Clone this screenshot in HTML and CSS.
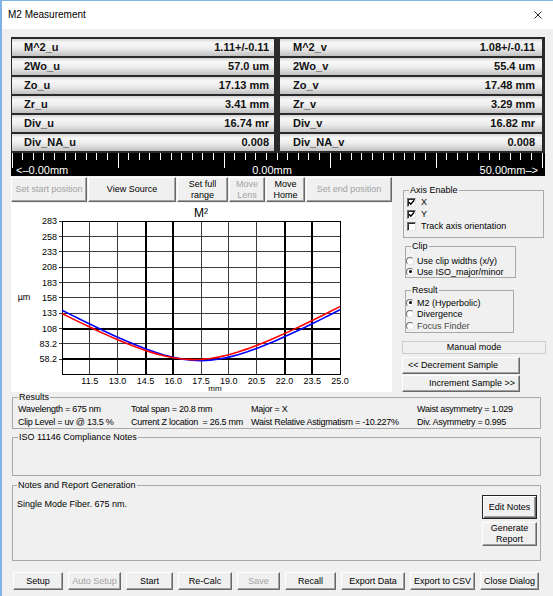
FILE: index.html
```html
<!DOCTYPE html>
<html>
<head>
<meta charset="utf-8">
<title>M2 Measurement</title>
<link rel="stylesheet" href="styles.css">
</head>
<body>
<div class="window">
  <div class="titlebar">
    <span class="title">M2 Measurement</span>
    <svg class="close" viewBox="0 0 8 8"><path d="M0.5 0.5L7.5 7.5M7.5 0.5L0.5 7.5" stroke="#111" stroke-width="0.9" fill="none"/></svg>
  </div>
  <div class="content">
    <div class="readout">
      <div class="col">
        <div class="row"><span>M^2_u</span><span>1.11+/-0.11</span></div>
        <div class="row"><span>2Wo_u</span><span>57.0 um</span></div>
        <div class="row"><span>Zo_u</span><span>17.13 mm</span></div>
        <div class="row"><span>Zr_u</span><span>3.41 mm</span></div>
        <div class="row"><span>Div_u</span><span>16.74 mr</span></div>
        <div class="row"><span>Div_NA_u</span><span>0.008</span></div>
      </div>
      <div class="col right">
        <div class="row"><span>M^2_v</span><span>1.08+/-0.11</span></div>
        <div class="row"><span>2Wo_v</span><span>55.4 um</span></div>
        <div class="row"><span>Zo_v</span><span>17.48 mm</span></div>
        <div class="row"><span>Zr_v</span><span>3.29 mm</span></div>
        <div class="row"><span>Div_v</span><span>16.82 mr</span></div>
        <div class="row"><span>Div_NA_v</span><span>0.008</span></div>
      </div>
    </div>
    <div class="ruler">
      <svg class="ticks" width="534" height="23" viewBox="0 0 534 23">
        <path stroke="#fff" stroke-width="1" fill="none" d="M11.5 0v7M22.5 0v7M32.5 0v7M43.5 0v7M54.5 0v7M64.5 0v7M75.5 0v7M85.5 0v7M96.5 0v7M117.5 0v7M128.5 0v7M138.5 0v7M149.5 0v7M160.5 0v7M170.5 0v7M181.5 0v7M191.5 0v7M202.5 0v7M223.5 0v7M234.5 0v7M244.5 0v7M255.5 0v7M266.5 0v7M276.5 0v7M287.5 0v7M297.5 0v7M308.5 0v7M329.5 0v7M340.5 0v7M350.5 0v7M361.5 0v7M372.5 0v7M382.5 0v7M393.5 0v7M403.5 0v7M414.5 0v7M435.5 0v7M446.5 0v7M456.5 0v7M467.5 0v7M478.5 0v7M488.5 0v7M499.5 0v7M509.5 0v7M520.5 0v7"/>
        <path stroke="#fff" stroke-width="1" fill="none" d="M1.5 0v15M107.5 0v15M213.5 0v15M319.5 0v15M425.5 0v15M531.5 0v15"/>
      </svg>
      <div class="ruler-labels">
        <span class="rl-left">&lt;–0.00mm</span>
        <span class="rl-mid">0.00mm</span>
        <span class="rl-right">50.00mm–&gt;</span>
      </div>
    </div>
    <div class="mid">
      <div class="leftcol">
        <div class="toolbar">
          <button class="btn dis w-start">Set start position</button>
          <button class="btn w-src">View Source</button>
          <button class="btn w-full">Set full<br>range</button>
          <button class="btn dis w-lens">Move<br>Lens</button>
          <button class="btn w-home">Move<br>Home</button>
          <button class="btn dis w-end">Set end position</button>
        </div>
        <div class="chart">
          <svg width="381" height="189" viewBox="0 0 381 189">
            <g stroke="#3c3c3c" stroke-width="1" fill="none" shape-rendering="crispEdges">
              <path d="M48 33.5H329M48 48.5H329M48 64.5H329M48 79.5H329M48 94.5H329M48 110.5H329M48 140.5H329"/>
              <path d="M48 18.5H329M48 125.5H51M48 156.5H51"/>
              <path d="M78.5 18V171M106.5 18V171M190.5 18V171M217.5 18V171M245.5 18V171"/>
            </g>
            <g stroke="#000" stroke-width="2" fill="none" shape-rendering="crispEdges">
              <path d="M51 125.5H329M51 156H329"/>
              <path d="M134.5 18V171M162 18V171M273.5 18V171M301 18V171"/>
            </g>
            <rect x="51.5" y="18.5" width="278" height="153" fill="none" stroke="#000" stroke-width="1" shape-rendering="crispEdges"/>
            <polyline fill="none" stroke="#0000ff" stroke-width="1.6" points="51,107.18 60.27,111.88 69.53,116.52 78.8,121.08 88.07,125.56 97.33,129.93 106.6,134.17 115.87,138.24 125.13,142.11 134.4,145.73 143.67,149.02 152.93,151.92 162.2,154.31 171.47,156.12 180.73,157.23 190,157.6 199.27,157.17 208.53,156 217.8,154.14 227.07,151.7 236.33,148.77 245.6,145.45 254.87,141.81 264.13,137.93 273.4,133.83 282.67,129.58 291.93,125.2 301.2,120.72 310.47,116.15 319.73,111.5 329,106.8"/>
            <polyline fill="none" stroke="#ff0000" stroke-width="1.6" points="51,110.55 60.27,115.14 69.53,119.65 78.8,124.09 88.07,128.42 97.33,132.62 106.6,136.66 115.87,140.51 125.13,144.12 134.4,147.42 143.67,150.36 152.93,152.82 162.2,154.74 171.47,156.02 180.73,156.59 190,156.41 199.27,155.49 208.53,153.9 217.8,151.7 227.07,149 236.33,145.88 245.6,142.42 254.87,138.69 264.13,134.75 273.4,130.62 282.67,126.36 291.93,121.98 301.2,117.5 310.47,112.94 319.73,108.32 329,103.64"/>
            <g font-family="Liberation Sans, Arial, sans-serif" font-size="9" fill="#000" text-anchor="end">
              <text x="46" y="21">283</text>
              <text x="46" y="36.5">258</text>
              <text x="46" y="51.5">233</text>
              <text x="46" y="67">208</text>
              <text x="46" y="82.5">183</text>
              <text x="46" y="97.5">158</text>
              <text x="46" y="113">133</text>
              <text x="46" y="128.5">108</text>
              <text x="46" y="143.5">83.2</text>
              <text x="46" y="159">58.2</text>
            </g>
            <g font-family="Liberation Sans, Arial, sans-serif" font-size="9" fill="#000" text-anchor="middle">
              <text x="78.8" y="181">11.5</text>
              <text x="106.6" y="181">13.0</text>
              <text x="134.4" y="181">14.5</text>
              <text x="162.2" y="181">16.0</text>
              <text x="190" y="181">17.5</text>
              <text x="217.8" y="181">19.0</text>
              <text x="245.6" y="181">20.5</text>
              <text x="273.4" y="181">22.0</text>
              <text x="301.2" y="181">23.5</text>
              <text x="329" y="181">25.0</text>
              <text x="204" y="188" font-size="8">mm</text>
              <text x="13" y="97">µm</text>
              <text x="190" y="14" font-size="12">M²</text>
            </g>
          </svg>
        </div>
      </div>
      <div class="rightcol">
        <fieldset class="grp axis">
          <legend>Axis Enable</legend>
          <div class="opt ck"><span class="cb"><svg viewBox="0 0 7 7"><path d="M1 3.3L2.8 5.2L6.2 1.2" stroke="#000" stroke-width="1.4" fill="none"/></svg></span><span>X</span></div>
          <div class="opt ck"><span class="cb"><svg viewBox="0 0 7 7"><path d="M1 3.3L2.8 5.2L6.2 1.2" stroke="#000" stroke-width="1.4" fill="none"/></svg></span><span>Y</span></div>
          <div class="opt ck"><span class="cb"></span><span>Track axis orientation</span></div>
        </fieldset>
        <fieldset class="grp clip">
          <legend>Clip</legend>
          <div class="opt rd"><span class="rb"></span><span>Use clip widths (x/y)</span></div>
          <div class="opt rd"><span class="rb on"></span><span>Use ISO_major/minor</span></div>
        </fieldset>
        <fieldset class="grp result">
          <legend>Result</legend>
          <div class="opt rd r2"><span class="rb on"></span><span>M2 (Hyperbolic)</span></div>
          <div class="opt rd r2"><span class="rb"></span><span>Divergence</span></div>
          <div class="opt rd r2 faint"><span class="rb"></span><span>Focus Finder</span></div>
        </fieldset>
        <div class="manual">Manual mode</div>
        <button class="btn step dec">&lt;&lt; Decrement Sample</button>
        <button class="btn step inc">Increment Sample &gt;&gt;</button>
      </div>
    </div>
    <fieldset class="grp wide results">
      <legend>Results</legend>
      <div class="res-grid">
        <span>Wavelength = 675 nm</span>
        <span>Total span = 20.8 mm</span>
        <span>Major = X</span>
        <span>Waist asymmetry = 1.029</span>
        <span>Clip Level = uv @ 13.5 %</span>
        <span>Current Z location &nbsp;= 26.5 mm</span>
        <span>Waist Relative Astigmatism = -10.227%</span>
        <span>Div. Asymmetry = 0.995</span>
      </div>
    </fieldset>
    <fieldset class="grp wide iso">
      <legend>ISO 11146 Compliance Notes</legend>
    </fieldset>
    <fieldset class="grp wide notes">
      <legend>Notes and Report Generation</legend>
      <div class="notes-body">
        <span class="note-text">Single Mode Fiber. 675 nm.</span>
        <div class="note-btns">
          <button class="btn def">Edit Notes</button>
          <button class="btn">Generate<br>Report</button>
        </div>
      </div>
    </fieldset>
    <div class="bottombar">
      <button class="btn b-setup">Setup</button>
      <button class="btn dis b-auto">Auto Setup</button>
      <button class="btn b-start">Start</button>
      <button class="btn b-recalc">Re-Calc</button>
      <button class="btn dis b-save">Save</button>
      <button class="btn b-recall">Recall</button>
      <button class="btn b-export">Export Data</button>
      <button class="btn b-csv">Export to CSV</button>
      <button class="btn b-close">Close Dialog</button>
    </div>
  </div>
</div>
</body>
</html>
```

FILE: styles.css
```css
* { box-sizing: border-box; }
html, body { margin: 0; padding: 0; }
body {
  width: 553px;
  height: 596px;
  overflow: hidden;
  background: #f0f0f0;
  font-family: "Liberation Sans", Arial, sans-serif;
  font-size: 9px;
  line-height: 10px;
  color: #000;
}
.window {
  width: 553px;
  height: 596px;
  border-left: 2px solid #80b3e4;
  border-top: 1px solid #80b3e4;
  background: #f0f0f0;
}
.titlebar {
  height: 28px;
  background: #fff;
  display: flex;
  align-items: center;
  justify-content: space-between;
  padding: 0 11px 0 6px;
}
.title { font-size: 10px; line-height: 12px; }
.close { width: 8px; height: 8px; display: block; }

.content { padding: 8px 0 0 9px; }

/* readout panel */
.readout {
  width: 534px;
  display: grid;
  grid-template-columns: 262px 262px;
  column-gap: 6px;
  padding: 2px 3px 0 1px;
  background: #2a2a2a;
}
.col { display: flex; flex-direction: column; }
.row {
  height: 19px;
  border-bottom: 2px solid #2a2a2a;
  background: linear-gradient(to bottom, #d6d6d6 0%, #f8f8f8 22%, #ececec 55%, #c2c2c2 100%);
  display: flex;
  align-items: center;
  justify-content: space-between;
  padding: 0 5px 0 12px;
  font-weight: bold;
  font-size: 11px;
  line-height: 13px;
  color: #111;
}
.col.right .row { padding: 0 7px 0 13px; }

/* ruler */
.ruler {
  width: 534px;
  height: 23px;
  background: #000;
  display: grid;
}
.ruler > * { grid-area: 1 / 1; }
.ticks { display: block; }
.ruler-labels {
  display: grid;
  grid-template-columns: 1fr auto 1fr;
  align-items: end;
  padding: 0 7px 0 5px;
  color: #fff;
  font-size: 11px;
  line-height: 11px;
}
.rl-left { justify-self: start; }
.rl-mid { margin-right: 10px; }
.rl-right { justify-self: end; }

/* middle */
.mid {
  display: flex;
  gap: 10px;
  margin-top: 1px;
  height: 215px;
}
.leftcol { width: 381px; }
.toolbar { display: flex; gap: 1px; height: 25px; }
.chart { margin-top: 1px; height: 189px; background: #fff; overflow: hidden; }
.chart svg { display: block; }

/* buttons */
.btn {
  appearance: none;
  -webkit-appearance: none;
  margin: 0;
  padding: 0;
  background: #f0f0f0;
  border: 1px solid;
  border-color: #fff #696969 #696969 #fff;
  box-shadow: inset -1px -1px 0 #a0a0a0;
  font-family: "Liberation Sans", Arial, sans-serif;
  font-size: 9px;
  line-height: 11px;
  color: #000;
  display: flex;
  align-items: center;
  justify-content: center;
  text-align: center;
}
.btn.dis { color: #a3a3a3; }
.btn.def {
  border-color: #222;
  box-shadow: inset 1px 1px 0 #fff, inset -1px -1px 0 #696969, inset -2px -2px 0 #a0a0a0;
}
.w-start { width: 76px; }
.w-src { width: 88px; }
.w-full { width: 51px; }
.w-lens { width: 36px; }
.w-home { width: 39px; }
.w-end { width: 86px; }

/* group boxes */
.grp {
  margin: 0;
  padding: 0;
  border: 1px solid #a9a9a9;
  min-width: 0;
  font-size: 9px;
  line-height: 10px;
}
.grp legend {
  padding: 0 1px;
  font-size: 9px;
  line-height: 10px;
}

.rightcol { width: 144px; display: flex; flex-direction: column; }
.axis { margin: 8px 0 0 1px; width: 141px; padding: 1px 3px 5px 3px; }
.axis legend { margin-left: 2px; }
.clip { margin: 3px 0 0 3px; width: 111px; padding: 4px 0 0 0; }
.clip legend { margin-left: 5px; }
.result { margin: 7px 0 0 3px; width: 109px; padding: 2px 0 0 0; }
.result legend { margin-left: 5px; }

.opt { display: flex; align-items: center; }
.ck { height: 12px; gap: 5px; }
.rd { height: 11px; gap: 3px; }
.rd.r2 { height: 11.5px; }
.faint { color: #4a4a4a; }

.cb {
  width: 9px;
  height: 9px;
  border: 1px solid;
  border-color: #6b6b6b #e3e3e3 #e3e3e3 #6b6b6b;
  box-shadow: inset 1px 1px 0 #2b2b2b;
  background: #fff;
  display: block;
  flex: none;
}
.cb svg { display: block; width: 7px; height: 7px; }
.rb {
  width: 8px;
  height: 8px;
  border-radius: 50%;
  border: 1px solid;
  border-color: #6f6f6f #e6e6e6 #e6e6e6 #6f6f6f;
  background: #fff;
  display: flex;
  align-items: center;
  justify-content: center;
  flex: none;
}
.rb.on::after {
  content: "";
  width: 3px;
  height: 3px;
  border-radius: 50%;
  background: #000;
}

.manual {
  margin-top: 8px;
  height: 14px;
  border: 1px solid #cdcdcd;
  display: flex;
  align-items: center;
  justify-content: center;
}
.step { width: 118px; height: 18px; }
.dec { margin-top: 3px; justify-content: flex-start; padding-left: 5px; }
.inc { margin-top: 1px; justify-content: flex-end; padding-right: 4px; }

/* lower sections */
.wide { width: 529px; margin-left: 1px; padding: 0 0 0 5px; }
.wide legend { margin-left: 0; }
.results { height: 37px; }
.res-grid {
  display: grid;
  grid-template-columns: 113px 120px 166px auto;
  grid-auto-rows: 13px;
  align-items: center;
  white-space: nowrap;
  letter-spacing: -0.25px;
}
.iso { margin-top: 3px; height: 44px; }
.notes { margin-top: 4px; height: 81px; padding: 0 3px 0 4px; }
.notes-body { display: flex; justify-content: space-between; align-items: flex-start; }
.note-text { margin-top: 9px; line-height: 11px; }
.note-btns { display: flex; flex-direction: column; gap: 3px; margin-top: 5px; }
.note-btns .btn { width: 55px; height: 24px; }

.bottombar {
  display: flex;
  gap: 5px;
  margin: 11px 0 0 2px;
  height: 18px;
}
.bottombar .btn { height: 18px; }
.b-setup { width: 50px; }
.b-auto { width: 53px; }
.b-start { width: 47px; }
.b-recalc { width: 54px; }
.b-save { width: 43px; }
.b-recall { width: 51px; }
.b-export { width: 64px; }
.b-csv { width: 65px; }
.b-close { width: 59px; }
```
